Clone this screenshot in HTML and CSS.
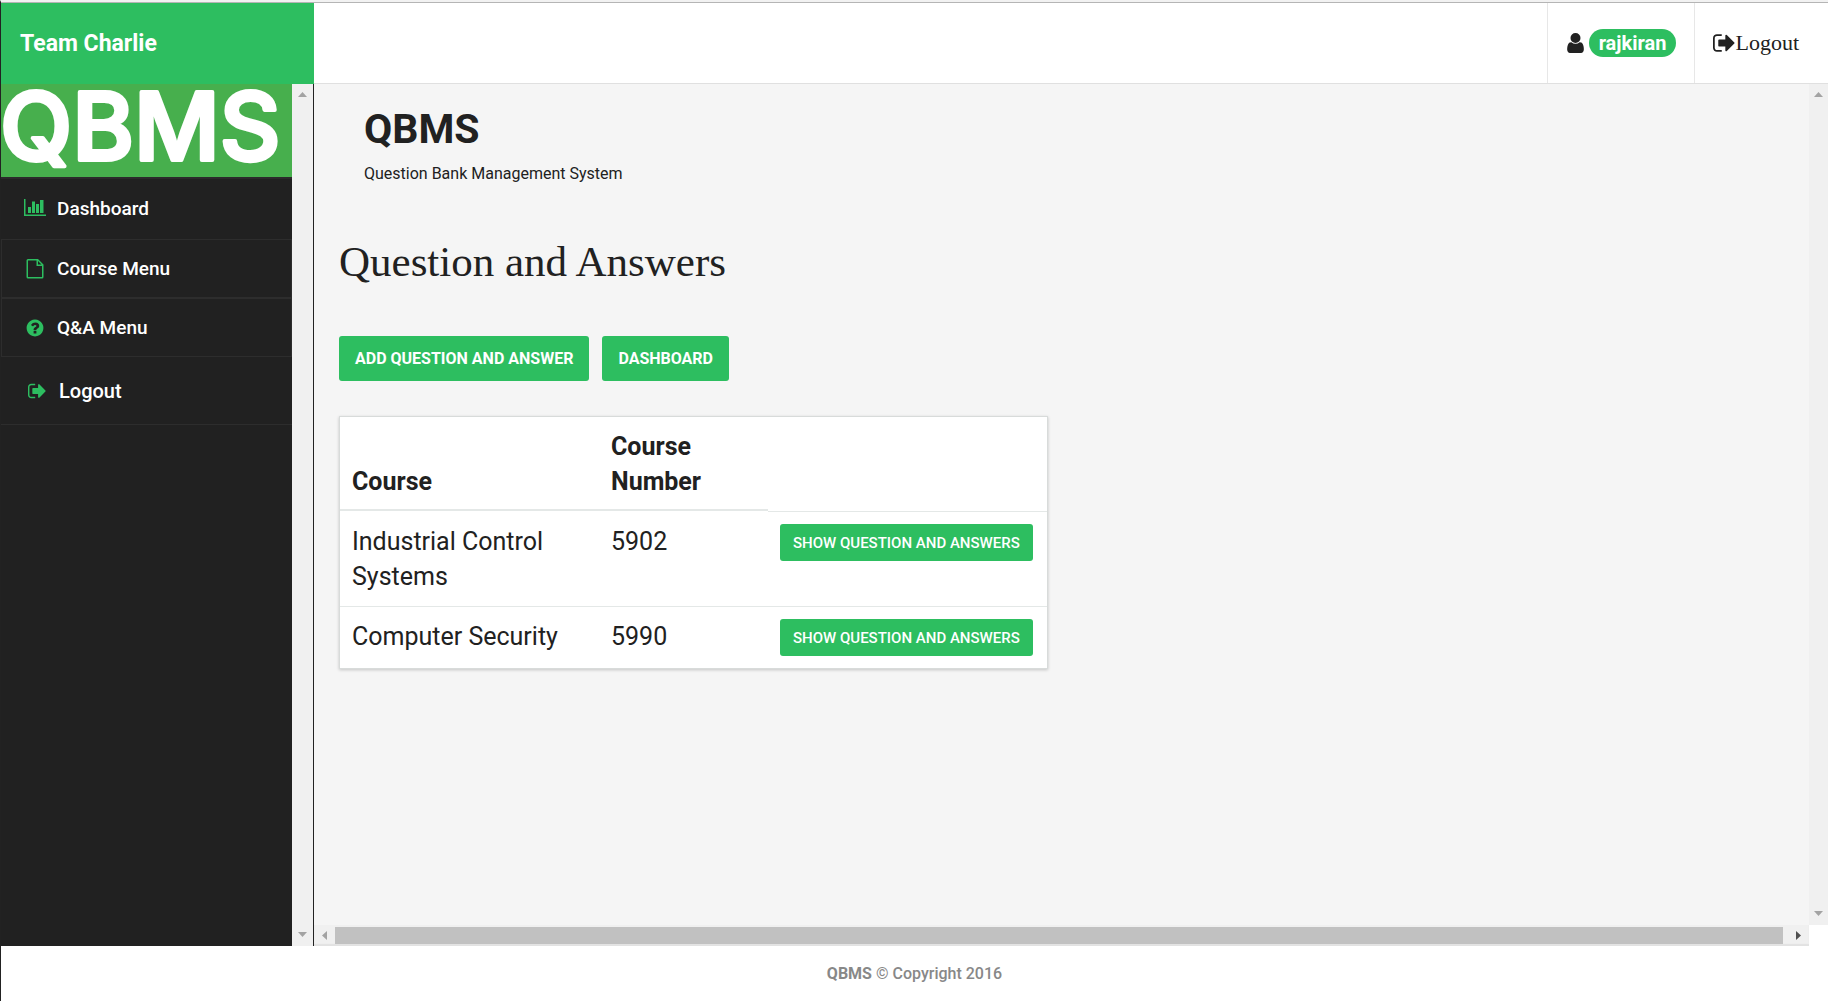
FILE: index.html
```html
<!DOCTYPE html>
<html lang="en">
<head>
<meta charset="utf-8">
<title>QBMS - Question and Answers</title>
<link rel="stylesheet" href="styles.css">
</head>
<body>
<svg class="sprite" aria-hidden="true">
  <symbol id="sign-out" viewBox="0 96 1600 1600"><path d="M640 1440q0 4 1 20t.5 26.500-3 23.500-10 19.500-20.500 6.500h-320q-119 0-203.500-84.500t-84.500-203.500v-704q0-119 84.500-203.500t203.500-84.500h320q13 0 22.500 9.500t9.500 22.500q0 4 1 20t.5 26.500-3 23.500-10 19.500-20.500 6.500h-320q-66 0-113 47t-47 113v704q0 66 47 113t113 47h312l11.500 1 11.500 3 8 5.500 7 9 2 13.500zm928-544q0 26-19 45l-544 544q-19 19-45 19t-45-19-19-45v-288h-448q-26 0-45-19t-19-45v-384q0-26 19-45t45-19h448v-288q0-26 19-45t45-19 45 19l544 544q19 19 19 45z"/></symbol>
</svg>
<header class="topbar">
  <a class="brand" href="#">Team Charlie</a>
  <nav class="account">
    <a class="account-item" href="#">
      <svg class="icon-user" viewBox="256 128 1280 1536" aria-hidden="true"><path d="M1536 1399q0 109-62.500 187t-150.500 78h-854q-88 0-150.500-78t-62.500-187q0-85 8.500-160.500t31.500-152 58.500-131 94-89 134.500-34.500q131 128 313 128t313-128q76 0 134.500 34.500t94 89 58.500 131 31.500 152 8.500 160.500zm-256-887q0 159-112.500 271.500t-271.500 112.500-271.500-112.500-112.500-271.500 112.500-271.500 271.500-112.500 271.500 112.500 112.500 271.500z"/></svg>
      <span class="badge">rajkiran</span>
    </a>
    <a class="account-item account-logout" href="#"><svg class="icon-exit" aria-hidden="true"><use href="#sign-out"/></svg>Logout</a>
  </nav>
</header>
<div class="workspace">
  <aside class="sidebar">
    <div class="sidebar-body">
      <svg class="logo" viewBox="0 0 291 93" role="img" aria-label="QBMS"><text class="logo-text" x="-1" y="76">QBMS</text></svg>
      <nav class="menu">
        <a class="menu-item first" href="#">
          <svg class="menu-icon" viewBox="0 0 22 20" aria-hidden="true"><path d="M0 1h1.500v15.500H22V18H0zM4 9h3v6H4zM8 3.500h3V15H8zM12 6h3v9h-3zM16 2h3.500v13H16z"/></svg>
          Dashboard
        </a>
        <a class="menu-item boxed" href="#">
          <svg class="menu-icon" viewBox="0 0 22 20" aria-hidden="true"><path fill-rule="evenodd" d="M4 0h10l5.500 5.500V18q0 1.500-1.500 1.500H4Q2.500 19.500 2.500 18V1.500Q2.500 0 4 0zM4 1.500V18h14V7h-5.500V1.500zM14 2v3.500h3.500z"/></svg>
          Course Menu
        </a>
        <a class="menu-item boxed" href="#">
          <svg class="menu-icon" viewBox="-64 -16 1920 1824" aria-hidden="true"><path d="M1024 1376v-192q0-14-9-23t-23-9h-192q-14 0-23 9t-9 23v192q0 14 9 23t23 9h192q14 0 23-9t9-23zm256-672q0-88-55.500-163t-138.500-116-170-41q-243 0-371 213-15 24 8 42l132 100q7 6 19 6 16 0 25-12 53-68 86-92 34-24 86-24 48 0 85.500 26t37.500 59q0 38-20 61t-68 45q-63 28-115.500 86.500t-52.500 125.500v36q0 14 9 23t23 9h192q14 0 23-9t9-23q0-19 21.500-49.500t54.500-49.500q32-18 49-28.500t46-35 44.500-48 28-60.500 12.500-81zm384 192q0 209-103 385.500t-279.500 279.500-385.500 103-385.500-103-279.500-279.500-103-385.500 103-385.500 279.500-279.500 385.500-103 385.500 103 279.500 279.500 103 385.500z"/></svg>
          Q&amp;A Menu
        </a>
        <a class="menu-item last" href="#">
          <svg class="menu-icon" aria-hidden="true"><use href="#sign-out"/></svg>
          Logout
        </a>
      </nav>
    </div>
    <div class="scroll-v">
      <svg class="arrow" viewBox="0 0 9 5" aria-hidden="true"><path d="M0 5h9L4.500 0z"/></svg>
      <svg class="arrow" viewBox="0 0 9 5" aria-hidden="true"><path d="M0 0h9L4.500 5z"/></svg>
    </div>
  </aside>
  <div class="pane">
    <main class="content">
      <div class="page-title">
        <h1>QBMS</h1>
        <p>Question Bank Management System</p>
      </div>
      <h2>Question and Answers</h2>
      <div class="actions">
        <button class="btn" type="button">ADD QUESTION AND ANSWER</button>
        <button class="btn" type="button">DASHBOARD</button>
      </div>
      <table class="courses">
        <thead>
          <tr><th class="col-course">Course</th><th class="col-number">Course Number</th><td class="col-action"></td></tr>
        </thead>
        <tbody>
          <tr><td>Industrial Control Systems</td><td>5902</td><td><button class="btn btn-row" type="button">SHOW QUESTION AND ANSWERS</button></td></tr>
          <tr><td>Computer Security</td><td>5990</td><td><button class="btn btn-row" type="button">SHOW QUESTION AND ANSWERS</button></td></tr>
        </tbody>
      </table>
    </main>
    <div class="scroll-v">
      <svg class="arrow" viewBox="0 0 9 5" aria-hidden="true"><path d="M0 5h9L4.500 0z"/></svg>
      <svg class="arrow" viewBox="0 0 9 5" aria-hidden="true"><path d="M0 0h9L4.500 5z"/></svg>
    </div>
    <div class="scroll-h">
      <svg class="arrow-h" viewBox="0 0 5 9" aria-hidden="true"><path d="M5 0v9L0 4.500z"/></svg>
      <div class="thumb"></div>
      <svg class="arrow-h active" viewBox="0 0 5 9" aria-hidden="true"><path d="M0 0v9l5-4.500z"/></svg>
    </div>
  </div>
</div>
<footer class="footer"><strong>QBMS</strong>&nbsp;© Copyright 2016</footer>
</body>
</html>
```
FILE: styles.css
```css
* { box-sizing: border-box; }

body {
  margin: 0;
  min-height: 100vh;
  display: flex;
  flex-direction: column;
  border-left: 1px solid #222;
  border-top: 2px solid #f2f2f2;
  background: #fff;
  color: #212121;
  font-family: Roboto, "Liberation Sans", sans-serif;
}

a { color: inherit; text-decoration: none; }
svg { display: block; fill: currentColor; flex: none; }
.sprite { display: none; }

.topbar {
  display: flex;
  height: 82px;
  border-top: 1px solid #b5b5b5;
}
.brand {
  display: flex;
  align-items: center;
  width: 313px;
  padding: 0 19px;
  background: #2dbe60;
  color: #fff;
  font-size: 23px;
  font-weight: 700;
}
.account {
  flex: 1;
  display: flex;
  justify-content: flex-end;
  border-bottom: 1px solid #e0e0e0;
}
.account-item {
  display: flex;
  align-items: center;
  gap: 4px;
  padding: 0 18px;
  border-left: 1px solid #e7e7e7;
}
.account-logout {
  gap: 0;
  padding-right: 29px;
  font: 22px "Liberation Serif", "Times New Roman", serif;
}
.icon-user { width: 19px; height: 20px; }
.icon-exit { width: 22px; height: 22px; }
.badge {
  padding: 0 10px;
  border-radius: 14px;
  line-height: 28px;
  background: #2dbe60;
  color: #fff;
  font-size: 20px;
  font-weight: 700;
}

.workspace { flex: 1; display: flex; }
.sidebar {
  width: 313px;
  display: flex;
  border-right: 1px solid #222;
}
.sidebar-body { flex: 1; background: #212121; }
.logo { width: 100%; overflow: visible; background: #47af4d; }
.logo-text {
  fill: #fff;
  stroke: #fff;
  stroke-width: 4px;
  stroke-linejoin: round;
  font: 500 94px Inter, "Liberation Sans", sans-serif;
}
.menu { border-top: 2px solid #2b2b2b; }
.menu-item {
  display: flex;
  align-items: center;
  gap: 11px;
  height: 60px;
  padding: 0 23px;
  color: #fff;
  font-size: 19px;
  font-weight: 500;
}
.menu-icon { width: 22px; height: 20px; color: #2dbe60; }
.first { padding-bottom: 2px; }
.boxed { height: 59px; padding: 0 22px; border: 1px solid #2d2d2d; }
.last { height: 68px; padding: 0 25px; border-bottom: 1px solid #2d2d2d; font-size: 20px; }
.last .menu-icon { height: 18px; }

.scroll-v {
  width: 21px;
  display: flex;
  flex-direction: column;
  justify-content: space-between;
  align-items: center;
  padding: 8px 0 9px;
  background: #f0f0f0;
  color: #a3a3a3;
}
.arrow { width: 9px; height: 5px; }

.pane {
  flex: 1;
  display: grid;
  grid-template: 1fr 21px / 1fr 19px;
  background: #fff;
}
.pane .scroll-v { width: auto; }
.content { padding: 23px 25px; background: #f5f5f5; }
.page-title { padding-left: 25px; }
h1 { margin: 0; font-size: 41px; line-height: 44px; }
p { margin: 13px 0 0; font-size: 16px; line-height: 20px; }
h2 {
  margin: 53px 0 50px;
  font: 43px/49px "Liberation Serif", "Times New Roman", serif;
}
.actions { display: flex; gap: 13px; }
.btn {
  height: 45px;
  padding: 0 16px;
  border: 0;
  border-radius: 3px;
  background: #2dbe60;
  color: #fff;
  font: 700 16px Roboto, "Liberation Sans", sans-serif;
  white-space: nowrap;
}
.btn-row { display: block; height: 37px; padding: 0 13px; font-size: 15px; font-weight: 500; }

.courses {
  width: 709px;
  margin-top: 35px;
  table-layout: fixed;
  border-spacing: 0;
  border: 1px solid #d8dbda;
  box-shadow: 0 1px 3px rgba(0, 0, 0, .2);
  background: #fff;
  font-size: 25px;
  line-height: 35px;
}
th, td { padding: 12px; text-align: left; vertical-align: top; }
th {
  padding-bottom: 10px;
  vertical-align: bottom;
  border-bottom: 2px solid #e4e8e7;
  font-weight: 700;
}
tbody td { border-top: 1px solid #e4e8e7; }
tbody tr:first-child td:nth-child(-n+2) { border-top-color: #fff; }
.col-course { width: 259px; }
.col-number { width: 169px; }

.scroll-h {
  display: flex;
  align-items: center;
  gap: 8px;
  padding: 0 8px;
  background: #f0f0f0;
  box-shadow: inset 0 -2px 1px #e2e2e2;
  color: #a3a3a3;
}
.thumb { flex: 1; height: 17px; margin-right: 5px; background: #c1c1c1; }
.arrow-h { width: 5px; height: 9px; }
.active { color: #505050; }

.footer {
  height: 55px;
  display: flex;
  justify-content: center;
  align-items: center;
  color: #888;
  font-size: 16px;
  font-weight: 500;
}
```
